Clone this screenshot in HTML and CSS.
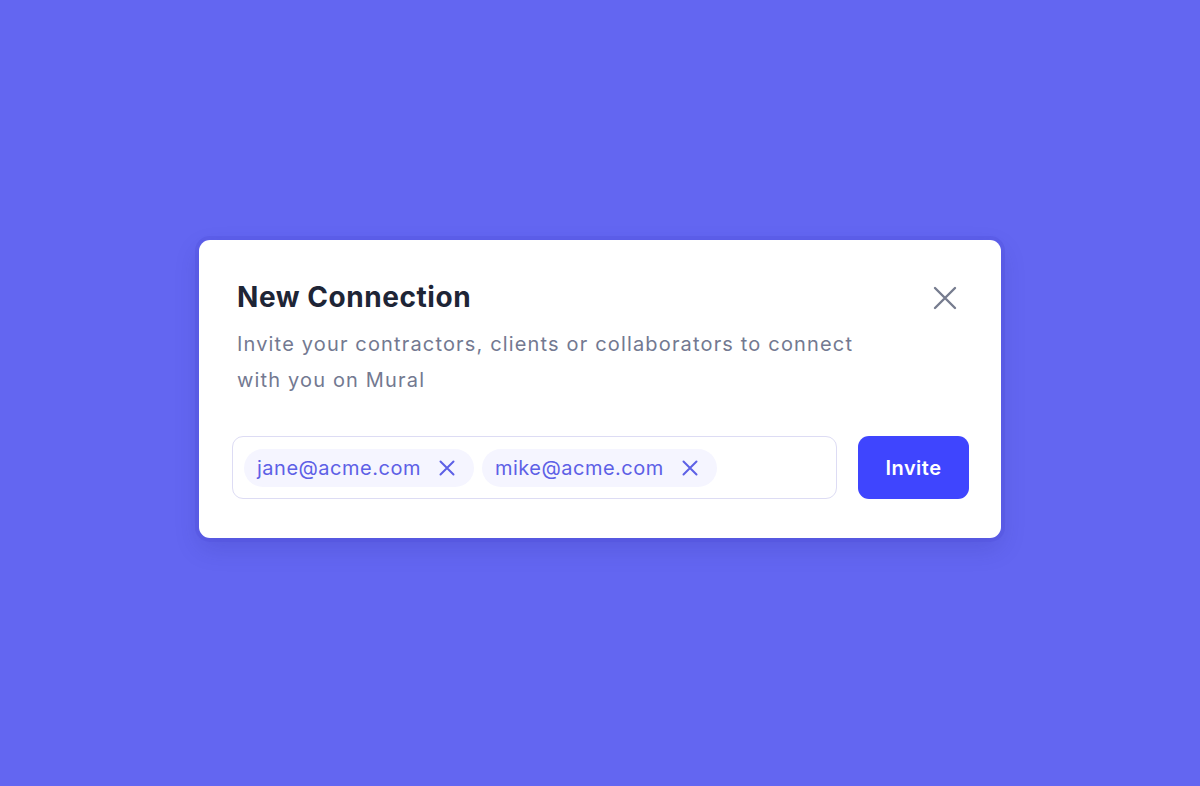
FILE: index.html
```html
<!DOCTYPE html>
<html lang="en">
<head>
<meta charset="utf-8">
<title>New Connection</title>
<link rel="stylesheet" href="styles.css">
</head>
<body>
<main class="page">
  <section class="card">
    <header class="card-head">
      <div class="head-text">
        <h1 class="title">New Connection</h1>
        <p class="desc">Invite your contractors, clients or collaborators to connect with you on Mural</p>
      </div>
      <button class="close" aria-label="Close">
        <svg width="24" height="24" viewBox="0 0 24 24" fill="none" stroke="currentColor" stroke-width="2.4" stroke-linecap="round"><path d="M2 2L22 22M22 2L2 22"/></svg>
      </button>
    </header>
    <div class="invite-row">
      <div class="tag-input">
        <span class="chip">jane@acme.com
          <svg class="chip-x" width="16" height="16" viewBox="0 0 16 16" fill="none" stroke="currentColor" stroke-width="2" stroke-linecap="round"><path d="M1.5 1.5L14.5 14.5M14.5 1.5L1.5 14.5"/></svg>
        </span>
        <span class="chip">mike@acme.com
          <svg class="chip-x" width="16" height="16" viewBox="0 0 16 16" fill="none" stroke="currentColor" stroke-width="2" stroke-linecap="round"><path d="M1.5 1.5L14.5 14.5M14.5 1.5L1.5 14.5"/></svg>
        </span>
      </div>
      <button class="invite">Invite</button>
    </div>
  </section>
</main>
</body>
</html>
```
FILE: styles.css
```css
* { box-sizing: border-box; }
html, body { margin: 0; padding: 0; }
body {
  background: #6366f1;
  font-family: Inter, "Noto Sans", sans-serif;
}
.page {
  min-height: 786px;
  display: flex;
  align-items: center;
  justify-content: center;
  padding-bottom: 8px;
}
.card {
  width: 802px;
  background: #ffffff;
  border-radius: 11px;
  padding: 32px 32px 39px 33px;
  box-shadow: 0 0 0 4px rgba(80, 80, 220, 0.35), 0 10px 25px rgba(40, 40, 140, 0.18);
}
.card-head {
  display: flex;
  justify-content: space-between;
  align-items: flex-start;
  padding: 0 0 0 5px;
}
.title {
  margin: 7px 0 0 0;
  font-size: 28px;
  font-weight: 700;
  line-height: 36px;
  color: #1e2536;
  letter-spacing: 0.55px;
}
.desc {
  margin: 11px 0 0 0;
  font-size: 20px;
  line-height: 36px;
  color: #737991;
  max-width: 640px;
  letter-spacing: 1.16px;
}
.close {
  border: 0;
  background: none;
  padding: 0;
  margin: 14px 12px 0 0;
  color: #767c8f;
  display: flex;
  cursor: pointer;
}
.invite-row {
  display: flex;
  gap: 21px;
  margin-top: 38px;
}
.tag-input {
  flex: 1;
  height: 63px;
  border: 1px solid #dddcf4;
  border-radius: 11px;
  display: flex;
  align-items: center;
  gap: 8px;
  padding: 0 11px;
}
.chip {
  display: inline-flex;
  align-items: center;
  gap: 18px;
  height: 38px;
  padding: 0 19px 0 13px;
  border-radius: 19px;
  background: #f5f5ff;
  color: #5d60e6;
  font-size: 20px;
  letter-spacing: 0.5px;
}
.chip-x { display: block; }
.invite {
  width: 111px;
  height: 63px;
  border: 0;
  border-radius: 11px;
  background: #3f45fe;
  color: #ffffff;
  font-family: Inter, "Noto Sans", sans-serif;
  font-size: 20px;
  font-weight: 600;
  letter-spacing: 0.5px;
  cursor: pointer;
}
```
